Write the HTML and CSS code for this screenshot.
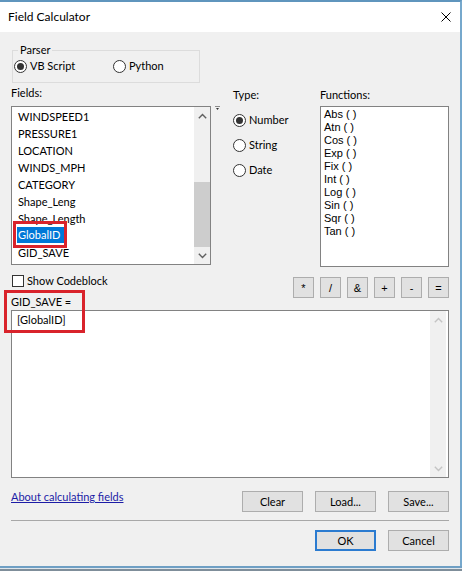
FILE: index.html
```html
<!DOCTYPE html>
<html>
<head>
<meta charset="utf-8">
<title>Field Calculator</title>
<link rel="stylesheet" href="styles.css">
</head>
<body>
<div class="window">
  <div class="titlebar">
    <span class="title">Field Calculator</span>
    <svg class="close" width="10" height="10" viewBox="0 0 10 10"><path d="M0.5 0.5L9.5 9.5M9.5 0.5L0.5 9.5" stroke="#000" stroke-width="1"/></svg>
  </div>
  <div class="content">
    <fieldset class="parser">
      <legend>Parser</legend>
      <div class="radio-row">
        <div class="radio vb"><span class="dot checked"></span>VB Script</div>
        <div class="radio"><span class="dot"></span>Python</div>
      </div>
    </fieldset>

    <div class="columns">
      <div class="col-fields">
        <div class="lbl">Fields:</div>
        <div class="listbox">
          <ul class="items">
            <li>WINDSPEED1</li>
            <li>PRESSURE1</li>
            <li>LOCATION</li>
            <li>WINDS_MPH</li>
            <li>CATEGORY</li>
            <li>Shape_Leng</li>
            <li>Shape_Length</li>
            <li><span class="sel">GlobalID<span class="mark mark-field"></span></span></li>
            <li>GID_SAVE</li>
          </ul>
          <div class="vscroll">
            <div class="sbtn"><svg width="9" height="6" viewBox="0 0 9 6"><path d="M0.8 5.2L4.5 1.5L8.2 5.2" fill="none" stroke="#606060" stroke-width="1.4"/></svg></div>
            <div class="track"><div class="thumb"></div></div>
            <div class="sbtn"><svg width="9" height="6" viewBox="0 0 9 6"><path d="M0.8 0.8L4.5 4.5L8.2 0.8" fill="none" stroke="#606060" stroke-width="1.4"/></svg></div>
          </div>
        </div>
      </div>
      <div class="col-arrow">
        <svg width="5" height="5" viewBox="0 0 5 5"><path d="M0 0.5H5" stroke="#8a8a8a" stroke-width="1"/><path d="M1 2H4L2.5 4Z" fill="#333"/></svg>
      </div>
      <div class="col-type">
        <div class="lbl">Type:</div>
        <div class="type-list">
          <div class="radio"><span class="dot checked"></span>Number</div>
          <div class="radio"><span class="dot"></span>String</div>
          <div class="radio"><span class="dot"></span>Date</div>
        </div>
      </div>
      <div class="col-func">
        <div class="lbl">Functions:</div>
        <div class="funcbox">
          <div>Abs ( )</div>
          <div>Atn ( )</div>
          <div>Cos ( )</div>
          <div>Exp ( )</div>
          <div>Fix ( )</div>
          <div>Int ( )</div>
          <div>Log ( )</div>
          <div>Sin ( )</div>
          <div>Sqr ( )</div>
          <div>Tan ( )</div>
        </div>
      </div>
    </div>

    <div class="mid-row">
      <div class="mid-left">
        <div class="check"><span class="box"></span>Show Codeblock</div>
        <div class="expr-lbl">GID_SAVE =<span class="mark mark-expr"></span></div>
      </div>
      <div class="ops">
        <button class="op">*</button>
        <button class="op">/</button>
        <button class="op">&amp;</button>
        <button class="op">+</button>
        <button class="op">-</button>
        <button class="op">=</button>
      </div>
    </div>

    <div class="expr">
      <div class="expr-text">[GlobalID]</div>
      <div class="vscroll light">
        <div class="sbtn"><svg width="9" height="6" viewBox="0 0 9 6"><path d="M0.8 5.2L4.5 1.5L8.2 5.2" fill="none" stroke="#c4c4c4" stroke-width="1.4"/></svg></div>
        <div class="track"></div>
        <div class="sbtn"><svg width="9" height="6" viewBox="0 0 9 6"><path d="M0.8 0.8L4.5 4.5L8.2 0.8" fill="none" stroke="#c4c4c4" stroke-width="1.4"/></svg></div>
      </div>
    </div>

    <div class="action-row">
      <a class="help" href="#">About calculating fields</a>
      <div class="btns">
        <button class="btn">Clear</button>
        <button class="btn">Load...</button>
        <button class="btn">Save...</button>
      </div>
    </div>
    <div class="sep"></div>
    <div class="ok-row">
      <button class="btn ok">OK</button>
      <button class="btn">Cancel</button>
    </div>
  </div>
</div>
<div class="taskbar"></div>
</body>
</html>
```
FILE: styles.css
```css
html, body {
  margin: 0;
  padding: 0;
}
body {
  width: 462px;
  height: 571px;
  overflow: hidden;
  background: #f0f0f0;
  font-family: Lato, "Liberation Sans", sans-serif;
  font-size: 11px;
  color: #000;
}
.window {
  box-sizing: border-box;
  width: 462px;
  height: 566px;
  border-top: 2px solid #5f95bd;
  border-right: 2px solid #76a8cc;
  background: #f0f0f0;
  display: flex;
  flex-direction: column;
}
.taskbar {
  height: 5px;
  background: linear-gradient(to bottom, #6f9fc4 0, #6f9fc4 2px, #dfe6ec 2px, #dfe6ec 3px, #7f8e9a 3px);
}
.titlebar {
  height: 30px;
  background: #fff;
  display: flex;
  align-items: center;
  justify-content: space-between;
  padding: 0 9px 0 8px;
}
.title {
  font-size: 12px;
  line-height: 30px;
}
.close {
  display: block;
}
.content {
  padding: 0 11px 0 11px;
  display: flex;
  flex-direction: column;
}

/* parser group */
.parser {
  box-sizing: border-box;
  width: 188px;
  margin: 11px 0 0 1px;
  padding: 0 0 8px 1px;
  border: 1px solid #dcdcdc;
  min-width: 0;
}
.parser legend {
  margin-left: 4px;
  padding: 0 2px;
  line-height: 14px;
}
.radio-row {
  display: flex;
  align-items: center;
  height: 16px;
  margin-top: 1px;
}
.radio {
  display: flex;
  align-items: center;
  height: 16px;
  line-height: 16px;
}
.radio.vb {
  width: 99px;
}
.dot {
  box-sizing: border-box;
  width: 13px;
  height: 13px;
  border: 1px solid #333;
  border-radius: 50%;
  background: #fff;
  margin-right: 3px;
  display: flex;
  align-items: center;
  justify-content: center;
  flex: none;
}
.dot.checked::after {
  content: "";
  width: 7px;
  height: 7px;
  border-radius: 50%;
  background: #333;
}

/* columns */
.columns {
  display: flex;
  align-items: flex-start;
}
.lbl {
  line-height: 14px;
}
.col-fields {
  width: 200px;
  padding-top: 3px;
}
.listbox {
  box-sizing: border-box;
  margin-top: 6px;
  height: 159px;
  border: 1px solid #828282;
  background: #fff;
  display: flex;
}
.items {
  list-style: none;
  margin: 0;
  padding: 1px 0 0 6px;
  flex: 1;
}
.items li {
  height: 17px;
  line-height: 17px;
  white-space: nowrap;
}
.sel {
  position: relative;
  display: inline-block;
  height: 16px;
  line-height: 16px;
  padding: 0 4px 0 1px;
  margin-left: -1px;
  vertical-align: top;
  background: #0078d7;
  color: #fff;
}
.mark {
  position: absolute;
  box-sizing: border-box;
  border: 3px solid #d9232b;
}
.mark-field {
  top: -6px;
  left: -4px;
  right: -3px;
  bottom: -5px;
}
.vscroll {
  width: 16px;
  background: #f0f0f0;
  display: flex;
  flex-direction: column;
  flex: none;
}
.sbtn {
  height: 17px;
  display: flex;
  align-items: center;
  justify-content: center;
  flex: none;
}
.sbtn svg {
  display: block;
}
.track {
  flex: 1;
  display: flex;
  flex-direction: column;
}
.thumb {
  margin-top: auto;
  height: 65px;
  background: #cdcdcd;
}
.col-arrow {
  width: 5px;
  margin-left: 4px;
  padding-top: 23px;
}
.col-arrow svg {
  display: block;
}
.col-type {
  width: 87px;
  margin-left: 13px;
  padding-top: 5px;
}
.type-list {
  margin-top: 10px;
  display: flex;
  flex-direction: column;
  gap: 9px;
}
.col-func {
  width: 129px;
  padding-top: 5px;
}
.funcbox {
  box-sizing: border-box;
  margin-top: 4px;
  height: 161px;
  border: 1px solid #828282;
  background: #fff;
  padding: 1px 0 0 3px;
  font-family: "Liberation Sans", Arial, sans-serif;
  font-size: 11px;
}
.funcbox div {
  height: 13px;
  line-height: 13px;
}

/* middle row */
.mid-row {
  margin-top: 7px;
  display: flex;
  justify-content: space-between;
  align-items: flex-start;
}
.check {
  display: flex;
  align-items: center;
  height: 14px;
  line-height: 14px;
}
.box {
  box-sizing: border-box;
  width: 12px;
  height: 12px;
  border: 1px solid #333;
  background: #fff;
  margin: 0 3px 0 1px;
}
.expr-lbl {
  position: relative;
  margin-top: 8px;
  line-height: 12px;
  height: 12px;
}
.mark-expr {
  top: -6px;
  left: -7px;
  width: 81px;
  height: 43px;
}
.ops {
  display: flex;
  gap: 6px;
  margin-top: 3px;
}
.op {
  box-sizing: border-box;
  width: 21px;
  height: 21px;
  padding: 0;
  border: 1px solid #adadad;
  background: #e1e1e1;
  font-family: "Liberation Sans", Arial, sans-serif;
  font-size: 11px;
  color: #000;
}

/* expression */
.expr {
  box-sizing: border-box;
  margin-top: 2px;
  height: 168px;
  border: 1px solid #828282;
  background: #fff;
  display: flex;
}
.expr-text {
  flex: 1;
  padding: 2px 5px;
  line-height: 14px;
}
.vscroll.light {
  margin: 0 2px 0 0;
}

/* bottom */
.action-row {
  margin-top: 12px;
  display: flex;
  justify-content: space-between;
  align-items: flex-start;
}
.help {
  line-height: 14px;
  color: #1c1ca6;
  text-decoration: underline;
}
.btns,
.ok-row {
  display: flex;
  gap: 12px;
}
.btns {
  margin-top: 1px;
}
.btn {
  box-sizing: border-box;
  width: 61px;
  height: 21px;
  padding: 0;
  border: 1px solid #adadad;
  background: #e1e1e1;
  font-family: Lato, "Liberation Sans", sans-serif;
  font-size: 11px;
  color: #000;
}
.btn.ok {
  border: 2px solid #2b7bd0;
}
.sep {
  margin-top: 8px;
  height: 1px;
  background: #a8a8a8;
}
.ok-row {
  margin-top: 9px;
  justify-content: flex-end;
}
```
